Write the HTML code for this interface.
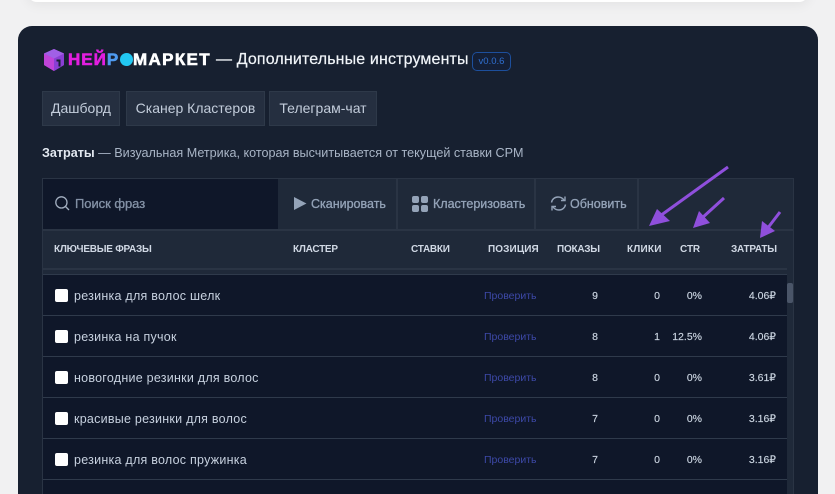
<!DOCTYPE html>
<html lang="ru"><head><meta charset="utf-8"><title>Нейромаркет</title>
<style>
html,body{margin:0;padding:0;height:494px;overflow:hidden}
body{width:835px;position:relative;background:#f1f1f2;font-family:"Liberation Sans",sans-serif}
.a{position:absolute;white-space:nowrap}
.top{left:27px;top:-20px;width:782px;height:22px;background:#fff;border-radius:10px;box-shadow:0 3px 12px rgba(0,0,0,.06)}
.card{left:18px;top:26px;width:800px;height:468px;background:#172030;border-radius:14px 14px 0 0}
.tab{top:91px;height:35px;background:#252f40;border:1px solid #2e3949;box-sizing:border-box;color:#c3cddb;font-size:14px;line-height:33px;text-align:center}
.h{top:244px;font-size:10px;font-weight:bold;color:#d0d8e4;line-height:12px;letter-spacing:-.25px}
.btn{top:179px;height:50px;background:#1f2939;border-right:2px solid #2a3444;box-sizing:border-box}
.bt{top:197px;font-size:12.5px;color:#94a3b8;line-height:14px;-webkit-text-stroke:.3px #94a3b8}
.line{left:43px;width:744px;height:1px;background:#2f3a4b}
.cb{left:55px;width:13px;height:13px;background:#fff;border-radius:2px}
.t{left:74px;font-size:12.5px;color:#c7d1df;line-height:14px;letter-spacing:.25px}
.p{left:484px;font-size:10.5px;color:#3d49a8;line-height:12px}
.n{font-size:10.5px;color:#cbd5e1;line-height:12px;text-align:right;-webkit-text-stroke:.15px #cbd5e1}
</style></head><body>
<div class="a top"></div>
<div class="a card"></div>

<svg class="a" style="left:43px;top:48px" width="24" height="24" viewBox="0 0 24 24">
<path d="M11 1 21 5.500V17L11 23 1 17V5.500Z" fill="#a53fd6"/>
<path d="M1 5.500 11 10.500V23L1 17Z" fill="#c044d8"/>
<path d="M11 10.500 21 5.500V17L11 23Z" fill="#8a3fd4"/>
<path d="M11 1 21 5.500 11 10.500 1 5.500Z" fill="#a060e6"/>
<path d="M13.500 11.500h4v7h-2v-5h-2z" fill="#172030"/>
</svg>
<div class="a" style="left:68px;top:50px;font-size:17px;font-weight:bold;line-height:20px;letter-spacing:1px;-webkit-text-stroke:.6px"><span style="color:#e21ee0;-webkit-text-stroke-color:#e21ee0">НЕЙ</span><span style="color:#4f9bf0;-webkit-text-stroke-color:#4f9bf0">Р</span></div>
<div class="a" style="left:120px;top:53px;width:13px;height:13px;border-radius:50%;background:#22c8f2"></div>
<div class="a" style="left:133px;top:50px;font-size:17px;font-weight:bold;color:#fff;line-height:20px;letter-spacing:1.35px;-webkit-text-stroke:.6px #fff">МАРКЕТ</div>
<div class="a" style="left:216px;top:51px;font-size:16px;color:#f1f5f9;line-height:18px;letter-spacing:.14px;-webkit-text-stroke:.2px #f1f5f9">— Дополнительные инструменты</div>
<div class="a" style="left:472px;top:52px;width:39px;height:19px;box-sizing:border-box;border:1px solid #1d4f9c;border-radius:5px;background:#141f36;color:#2f6fd0;font-size:9.5px;line-height:17px;text-align:center">v0.0.6</div>

<div class="a tab" style="left:42px;width:78px">Дашборд</div>
<div class="a tab" style="left:126px;width:139px">Сканер Кластеров</div>
<div class="a tab" style="left:269px;width:108px">Телеграм-чат</div>

<div class="a" style="left:42px;top:146px;font-size:12.6px;color:#a9b5c6;line-height:14px"><b style="color:#e2e8f0">Затраты</b> — Визуальная Метрика, которая высчитывается от текущей ставки CPM</div>

<div class="a" style="left:42px;top:178px;width:752px;height:320px;background:#1f2939;border:1px solid #2a3444;box-sizing:border-box"></div>
<div class="a" style="left:43px;top:179px;width:235px;height:50px;background:#0f1729"></div>
<div class="a btn" style="left:278px;width:120px"></div>
<div class="a btn" style="left:398px;width:138px"></div>
<div class="a btn" style="left:536px;width:103px"></div>
<div class="a" style="left:43px;top:229px;width:750px;height:2px;background:#2a3444"></div>

<svg class="a" style="left:54px;top:195px" width="17" height="17" viewBox="0 0 17 17" fill="none" stroke="#a3afc0" stroke-width="1.300"><circle cx="7.400" cy="7.400" r="5.600"/><path d="M11.500 11.500 15 15"/></svg>
<div class="a" style="left:75px;top:197px;font-size:13px;color:#8492a6;line-height:14px;-webkit-text-stroke:.3px #8492a6;letter-spacing:-.05px">Поиск фраз</div>

<svg class="a" style="left:293px;top:196px" width="15" height="15" viewBox="0 0 15 15"><path d="M1 1 13.500 7.500 1 14Z" fill="#94a3b8"/></svg>
<div class="a bt" style="left:311px">Сканировать</div>
<svg class="a" style="left:411px;top:195px" width="18" height="18" viewBox="0 0 18 18" fill="#94a3b8"><rect x="1" y="1" width="7" height="7" rx="2"/><rect x="10" y="1" width="7" height="7" rx="2"/><rect x="1" y="10" width="7" height="7" rx="2"/><rect x="10" y="10" width="7" height="7" rx="2"/></svg>
<div class="a bt" style="left:433px">Кластеризовать</div>
<svg class="a" style="left:550px;top:195px" width="17" height="17" viewBox="0 0 17 17" fill="none" stroke="#94a3b8" stroke-width="1.400"><path d="M1.500 7.500C2 4 5 2 8 2c2.500 0 4.500 1 6 3"/><path d="M15 1.500V5.500H11"/><path d="M15.500 9.500C15 13 12 15 9 15c-2.500 0-4.500-1-6-3"/><path d="M2 15.500V11.500H6"/></svg>
<div class="a bt" style="left:570px">Обновить</div>

<div class="a h" style="left:54px">КЛЮЧЕВЫЕ ФРАЗЫ</div>
<div class="a h" style="left:293px">КЛАСТЕР</div>
<div class="a h" style="left:411px">СТАВКИ</div>
<div class="a h" style="left:488px;letter-spacing:.1px">ПОЗИЦИЯ</div>
<div class="a h" style="left:557px">ПОКАЗЫ</div>
<div class="a h" style="left:627px;letter-spacing:.2px">КЛИКИ</div>
<div class="a h" style="left:680px">CTR</div>
<div class="a h" style="left:731px">ЗАТРАТЫ</div>

<div class="a" style="left:43px;top:268px;width:744px;height:2px;background:#2a3444"></div>
<div class="a" style="left:43px;top:274px;width:744px;height:220px;background:#0f1729"></div>
<div class="a line" style="top:274px"></div>
<div class="a line" style="top:315px"></div>
<div class="a line" style="top:356px"></div>
<div class="a line" style="top:397px"></div>
<div class="a line" style="top:438px"></div>
<div class="a line" style="top:479px"></div>
<div class="a" style="left:787px;top:283px;width:6px;height:20px;background:#4a5568;border-radius:2px"></div>

<div class="a cb" style="top:289px"></div><div class="a t" style="top:289px">резинка для волос шелк</div>
<div class="a p" style="top:290px">Проверить</div>
<div class="a n" style="left:578px;width:20px;top:290px">9</div><div class="a n" style="left:640px;width:20px;top:290px">0</div><div class="a n" style="left:672px;width:30px;top:290px">0%</div><div class="a n" style="left:736px;width:40px;top:290px">4.06₽</div>

<div class="a cb" style="top:330px"></div><div class="a t" style="top:330px">резинка на пучок</div>
<div class="a p" style="top:331px">Проверить</div>
<div class="a n" style="left:578px;width:20px;top:331px">8</div><div class="a n" style="left:640px;width:20px;top:331px">1</div><div class="a n" style="left:672px;width:30px;top:331px">12.5%</div><div class="a n" style="left:736px;width:40px;top:331px">4.06₽</div>

<div class="a cb" style="top:371px"></div><div class="a t" style="top:371px">новогодние резинки для волос</div>
<div class="a p" style="top:372px">Проверить</div>
<div class="a n" style="left:578px;width:20px;top:372px">8</div><div class="a n" style="left:640px;width:20px;top:372px">0</div><div class="a n" style="left:672px;width:30px;top:372px">0%</div><div class="a n" style="left:736px;width:40px;top:372px">3.61₽</div>

<div class="a cb" style="top:412px"></div><div class="a t" style="top:412px">красивые резинки для волос</div>
<div class="a p" style="top:413px">Проверить</div>
<div class="a n" style="left:578px;width:20px;top:413px">7</div><div class="a n" style="left:640px;width:20px;top:413px">0</div><div class="a n" style="left:672px;width:30px;top:413px">0%</div><div class="a n" style="left:736px;width:40px;top:413px">3.16₽</div>

<div class="a cb" style="top:453px"></div><div class="a t" style="top:453px">резинка для волос пружинка</div>
<div class="a p" style="top:454px">Проверить</div>
<div class="a n" style="left:578px;width:20px;top:454px">7</div><div class="a n" style="left:640px;width:20px;top:454px">0</div><div class="a n" style="left:672px;width:30px;top:454px">0%</div><div class="a n" style="left:736px;width:40px;top:454px">3.16₽</div>

<svg class="a" style="left:0;top:0" width="835" height="494" viewBox="0 0 835 494" fill="#8f4fdc">
<path d="M728 167 660 216" stroke="#8f4fdc" stroke-width="3" fill="none"/><path d="M649 226 657 209 670 221Z"/>
<path d="M724 198 702 218" stroke="#8f4fdc" stroke-width="3" fill="none"/><path d="M693 228 699 211 710 223Z"/>
<path d="M780 212 767 229" stroke="#8f4fdc" stroke-width="3" fill="none"/><path d="M760 238 762 221 775 231Z"/>
</svg>
</body></html>
